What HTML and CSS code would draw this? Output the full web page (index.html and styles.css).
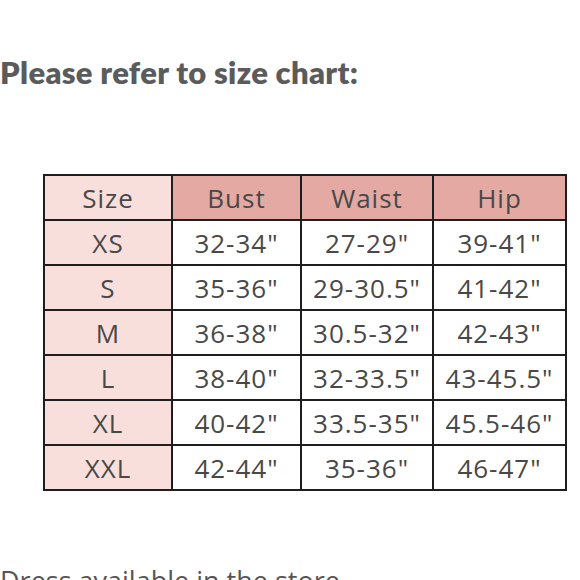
FILE: index.html
```html
<!DOCTYPE html>
<html>
<head>
<meta charset="utf-8">
<link rel="stylesheet" href="styles.css">
</head>
<body>
<h2 class="title">Please refer to size chart:</h2>
<table class="chart">
  <thead>
    <tr><th class="size-head">Size</th><th>Bust</th><th>Waist</th><th>Hip</th></tr>
  </thead>
  <tbody>
    <tr><td class="size">XS</td><td>32-34"</td><td>27-29"</td><td>39-41"</td></tr>
    <tr><td class="size">S</td><td>35-36"</td><td>29-30.5"</td><td>41-42"</td></tr>
    <tr><td class="size">M</td><td>36-38"</td><td>30.5-32"</td><td>42-43"</td></tr>
    <tr><td class="size">L</td><td>38-40"</td><td>32-33.5"</td><td>43-45.5"</td></tr>
    <tr><td class="size">XL</td><td>40-42"</td><td>33.5-35"</td><td>45.5-46"</td></tr>
    <tr><td class="size">XXL</td><td>42-44"</td><td>35-36"</td><td>46-47"</td></tr>
  </tbody>
</table>
<p class="note">Dress available in the store</p>
</body>
</html>
```
FILE: styles.css
```css
html, body {
  margin: 0;
  padding: 0;
  background: #fff;
  overflow: hidden;
  height: 580px;
}
.title {
  margin: 0;
  padding-top: 50px;
  font-family: Lato, "Noto Sans", sans-serif;
  font-weight: 800;
  font-size: 31px;
  line-height: 44px;
  letter-spacing: 0.3px;
  color: #5b5b5b;
}
.chart {
  margin: 80px 0 0 43px;
  border-collapse: collapse;
  font-family: "Open Sans", "Noto Sans", sans-serif;
  font-size: 26px;
  color: #484848;
}
.chart th, .chart td {
  border: 2px solid #1e1e1e;
  height: 43px;
  padding: 0;
  text-align: center;
  font-weight: 400;
  letter-spacing: 1px;
  white-space: nowrap;
}
.chart th { background: #e3a9a2; }
.chart th:nth-child(1) { width: 126px; }
.chart th:nth-child(2) { width: 127px; }
.chart th:nth-child(3) { width: 130px; }
.chart th:nth-child(4) { width: 131px; }
.chart .size-head, .chart .size { background: #f8dfdc; }
.note {
  margin: 71px 0 0 0;
  font-family: "Open Sans", "Noto Sans", sans-serif;
  font-size: 27px;
  color: #555;
}
```
